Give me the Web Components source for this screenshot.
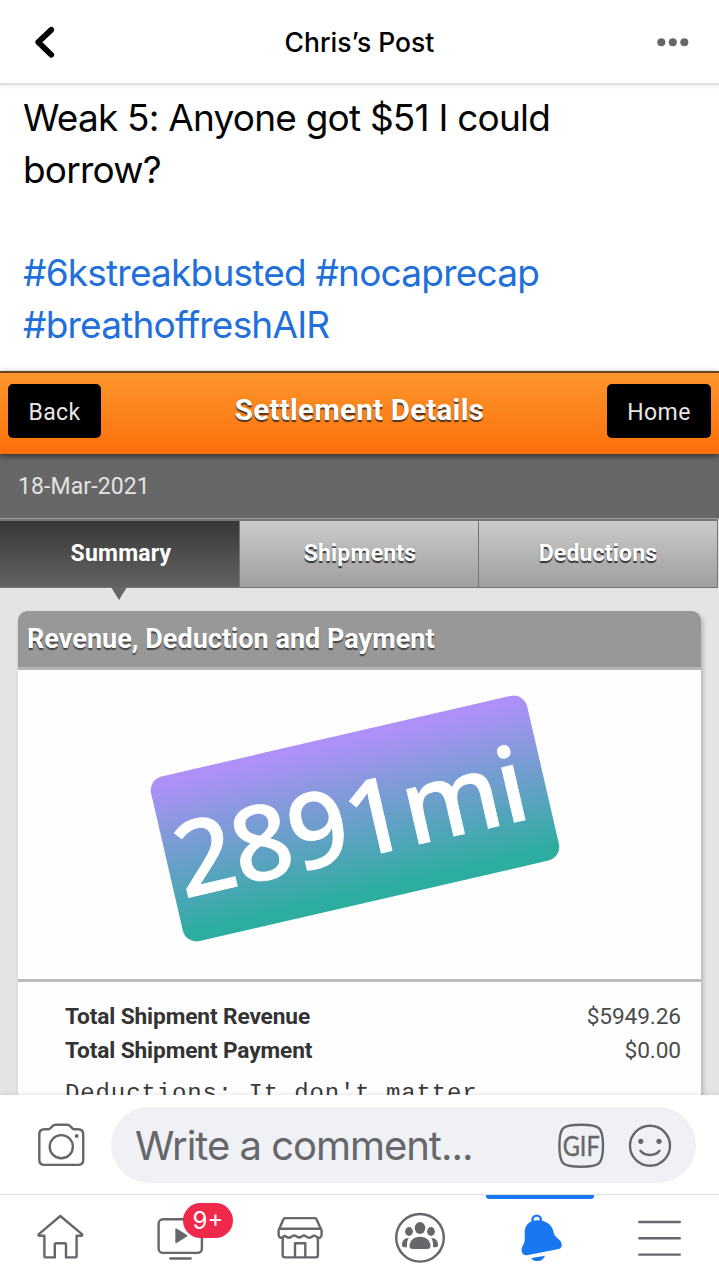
<!DOCTYPE html>
<html lang="en">
<head>
<meta charset="utf-8">
<title>Chris’s Post</title>
<style>
    body {
        margin: 0;
        background: #fff;
        font-family: Inter, "Liberation Sans", sans-serif;
    }
</style>
</head>
<body>
<post-page>
    <post-header slot="header">Chris’s Post</post-header>
    <post-text slot="content">
        <div>Weak 5: Anyone got $51 I could</div>
        <div>borrow?</div>
        <br>
        <post-tag>#6kstreakbusted</post-tag> <post-tag>#nocaprecap</post-tag>
        <div><post-tag>#breathoffreshAIR</post-tag></div>
    </post-text>
    <settlement-shot slot="content" date="18-Mar-2021">
        <shot-tab active>Summary</shot-tab>
        <shot-tab>Shipments</shot-tab>
        <shot-tab>Deductions</shot-tab>
        <mile-sticker slot="sticker">2891mi</mile-sticker>
        <amount-row slot="rows" amount="$5949.26">Total Shipment Revenue</amount-row>
        <amount-row slot="rows" amount="$0.00">Total Shipment Payment</amount-row>
        <span slot="note">Deductions: It don't matter</span>
    </settlement-shot>
    <comment-bar slot="footer">Write a comment...</comment-bar>
    <nav-bar slot="footer">
        <nav-item icon="home"></nav-item>
        <nav-item icon="watch" badge="9+"></nav-item>
        <nav-item icon="shop"></nav-item>
        <nav-item icon="groups"></nav-item>
        <nav-item icon="bell" active></nav-item>
        <nav-item icon="menu"></nav-item>
    </nav-bar>
</post-page>

<script>
// every element renders its markup once, into an open shadow root
function define(name, render) {
    window.customElements.define(name, class extends HTMLElement {
        constructor() {
            super();
            this.attachShadow({mode: 'open'});
            const template = document.createElement('template');
            template.innerHTML = render(this);
            this.shadowRoot.appendChild(template.content.cloneNode(true));
        }
    });
}

define('post-page', () => `
    <style>
        :host {
            display: flex;
            flex-direction: column;
            width: 719px;
            height: 1280px;
            overflow: hidden;
        }
        main {
            flex: 1;
            min-height: 0;
            overflow: hidden;
            display: flex;
            flex-direction: column;
        }
    </style>
    <slot name="header"></slot>
    <main><slot name="content"></slot></main>
    <footer><slot name="footer"></slot></footer>
`);

define('post-header', () => `
    <style>
        :host {
            display: grid;
            grid-template-columns: 100px 1fr 100px;
            align-items: center;
            height: 83px;
            flex: none;
            border-bottom: 2px solid #dedfe0;
            box-shadow: 0 1px 4px rgba(0, 0, 0, .09);
            box-sizing: content-box;
        }
        h1 {
            margin: 0;
            font-size: 26.5px;
            font-weight: 500;
            letter-spacing: 0;
            text-align: center;
        }
        svg {
            display: block;
        }
    </style>
    <svg width="100" height="83" fill="none" stroke="#000" stroke-width="5.8" stroke-linecap="round" stroke-linejoin="round">
        <path d="M51.2 29.8L38.3 42.2L51.2 54.8"/>
    </svg>
    <h1><slot></slot></h1>
    <svg width="100" height="83" fill="#65676b">
        <circle cx="42.3" cy="42.3" r="4"/>
        <circle cx="53.8" cy="42.3" r="4"/>
        <circle cx="65.3" cy="42.3" r="4"/>
    </svg>
`);

define('post-text', () => `
    <style>
        :host {
            display: block;
            flex: none;
            height: 278px;
            padding: 7px 23px 0;
            box-sizing: border-box;
            font-size: 37px;
            line-height: 51.8px;
            letter-spacing: -0.79px;
            white-space: nowrap;
            color: #050505;
        }
    </style>
    <slot></slot>
`);

define('post-tag', () => `
    <style>
        :host {
            color: #216fdb;
        }
    </style>
    <slot></slot>
`);

define('settlement-shot', el => `
    <style>
        :host {
            display: block;
            flex: none;
            margin-top: 8px;
            padding-bottom: 60px;
            background: #e4e4e4;
            font-family: Roboto, "Liberation Sans", sans-serif;
        }
        .bar {
            position: relative;
            display: flex;
            align-items: center;
            justify-content: space-between;
            height: 83px;
            box-sizing: border-box;
            padding: 0 8px 6px;
            border-top: 2px solid #6b4323;
            background: linear-gradient(#fd962d, #fc6f09);
            box-shadow: 0 2px 6px rgba(0, 0, 0, .55);
        }
        .button {
            height: 54px;
            border-radius: 5px;
            background: #000;
            color: #e6e6e6;
            font-size: 23px;
            line-height: 57px;
            letter-spacing: .4px;
            text-align: center;
        }
        .title {
            margin: -2px 0 0 11px;
            color: #fff;
            font-size: 29.5px;
            font-weight: 700;
            letter-spacing: .25px;
            text-shadow: 0 2px 1px #4a3527;
        }
        .date {
            height: 63px;
            padding: 1px 18px 0;
            background: #676767;
            color: #e2e2e2;
            font-size: 23px;
            line-height: 64px;
            letter-spacing: .1px;
        }
        .tabs {
            display: flex;
            height: 70px;
            padding-right: 1px;
            box-sizing: border-box;
            border-top: 1px solid #a0a0a0;
        }
        .card {
            margin: 23px 18px 0;
            border-radius: 9px 9px 0 0;
            background: #fefefe;
            box-shadow: 2px 3px 5px rgba(0, 0, 0, .22);
        }
        .head {
            height: 59px;
            padding: 0 9px;
            box-sizing: border-box;
            border-bottom: 3px solid #b5b5b5;
            border-radius: 9px 9px 0 0;
            background: #989898;
            color: #fff;
            font-size: 27px;
            font-weight: 700;
            line-height: 56px;
            letter-spacing: .03px;
            text-shadow: 0 2px 1px #454545;
        }
        .photo {
            display: flex;
            align-items: center;
            justify-content: center;
            height: 309px;
            border-bottom: 3px solid #babcbb;
        }
        .rows {
            padding: 18px 20px 0 47px;
        }
        .note {
            display: block;
            margin-top: 12px;
            color: #3a3a3a;
            font: 24px/30px "Liberation Mono", monospace;
            letter-spacing: .88px;
        }
    </style>
    <div class="bar">
        <div class="button" style="width: 93px">Back</div>
        <div class="title">Settlement Details</div>
        <div class="button" style="width: 104px">Home</div>
    </div>
    <div class="date">${el.getAttribute('date')}</div>
    <div class="tabs"><slot></slot></div>
    <div class="card">
        <div class="head">Revenue, Deduction and Payment</div>
        <div class="photo"><slot name="sticker"></slot></div>
        <div class="rows">
            <slot name="rows"></slot>
            <div class="note"><slot name="note"></slot></div>
        </div>
    </div>
`);

define('shot-tab', () => `
    <style>
        :host {
            position: relative;
            flex: 0 0 239px;
            box-sizing: border-box;
            padding-left: 2px;
            border: 1px solid #747474;
            border-left: 0;
            border-top-width: 2px;
            background: linear-gradient(#cbcbcb, #a09e9e);
            color: #fff;
            font-size: 23px;
            font-weight: 700;
            line-height: 66px;
            letter-spacing: .2px;
            text-align: center;
            text-shadow: 0 2px 1px #333;
        }
        :host(:last-of-type) {
            flex: 1;
            padding-left: 0;
        }
        :host([active]) {
            flex: 0 0 240px;
            padding-left: 3px;
            background: linear-gradient(#373735, #636363);
            text-shadow: none;
        }
        /* pointer under the open tab */
        :host([active])::after {
            content: "";
            position: absolute;
            top: 100%;
            left: 50%;
            margin-left: -9px;
            border: 8px solid transparent;
            border-top: 13px solid #666;
            border-bottom: 0;
        }
    </style>
    <slot></slot>
`);

define('mile-sticker', () => `
    <style>
        :host {
            display: block;
            width: 386px;
            height: 169px;
            box-sizing: border-box;
            padding-right: 12px;
            margin-right: 9px;
            margin-top: -13px;
            border-radius: 14px;
            background: linear-gradient(#ae90f8 4%, #2cada0 94%);
            transform: rotate(-13deg);
            color: #fff;
            font: 500 104px/168px "Noto Sans", sans-serif;
            letter-spacing: -1.2px;
            text-align: center;
            -webkit-text-stroke: .8px #fff;
        }
    </style>
    <slot></slot>
`);

define('amount-row', el => `
    <style>
        :host {
            display: flex;
            justify-content: space-between;
            color: #4c4c4c;
            font-size: 22.7px;
            line-height: 33.5px;
            letter-spacing: -0.12px;
        }
        b {
            color: #333;
            letter-spacing: -0.12px;
        }
    </style>
    <b><slot></slot></b>
    <span>${el.getAttribute('amount')}</span>
`);

define('comment-bar', () => `
    <style>
        :host {
            display: flex;
            position: relative;
            height: 99px;
            box-sizing: border-box;
            padding: 12px 23px 11px 0;
            background: #fff;
            box-shadow: 0 -1px 4px rgba(0, 0, 0, .09);
        }
        svg {
            flex: none;
            fill: none;
            stroke: #65676b;
            stroke-width: 2.4;
        }
        .field {
            flex: 1;
            display: flex;
            align-items: center;
            justify-content: space-between;
            border-radius: 38px;
            padding-left: 24px;
            background: #eff1f5;
            color: #65676b;
            font-size: 40px;
            letter-spacing: -1.03px;
            white-space: nowrap;
        }
        text {
            fill: #65676b;
            stroke: #65676b;
            stroke-width: .4;
            font: 27px Lato, sans-serif;
            letter-spacing: 0;
        }
    </style>
    <svg width="111" height="76">
        <path d="M44.5 22.3H48.5C51 22.3 51.5 17.8 55.5 17.8H67.2C71 17.8 71.6 22.3 74.2 22.3H78Q83.2 22.3 83.2 27.5V52.7Q83.2 57.9 78 57.9H44.5Q39.3 57.9 39.3 52.7V27.5Q39.3 22.3 44.5 22.3Z"/>
        <circle cx="61.3" cy="39.7" r="11.6"/>
        <circle cx="76.7" cy="29" r="1.9" fill="#65676b" stroke="none"/>
    </svg>
    <div class="field">
        <slot></slot>
        <svg width="146" height="76">
            <path d="M31 17.8C50 17.8 53 20.5 53 38.5C53 57 50 59.7 31 59.7C12 59.7 9.4 57 9.4 38.5C9.4 20.5 12 17.8 31 17.8Z"/>
            <text x="31.2" y="48.7" text-anchor="middle" textLength="37" lengthAdjust="spacingAndGlyphs">GIF</text>
            <circle cx="100" cy="38.7" r="20"/>
            <path d="M90.5 43.8C94.5 49.3 105.5 49.3 109.5 43.8" stroke-linecap="round"/>
            <g fill="#65676b" stroke="none">
                <circle cx="90.8" cy="34.3" r="2.6"/>
                <circle cx="109" cy="34.3" r="2.6"/>
            </g>
        </svg>
    </div>
`);

define('nav-bar', () => `
    <style>
        :host {
            display: flex;
            height: 86px;
            box-sizing: border-box;
            border-top: 1px solid #e3e4e6;
            background: #fff;
        }
    </style>
    <slot></slot>
`);

// drawn on a 120x85 grid, one grid for each nav column
const icons = {
    home: `
        <path d="M60.3 21L38.6 39.3Q38.3 40.6 39.5 40.7H44.4V61Q44.4 62.4 45.8 62.4H54.8V49.5Q54.8 48.2 56.2 48.2H64.6Q66 48.2 66 49.5V62.4H75.2Q76.6 62.4 76.6 61V40.7H81.3Q82.5 40.6 82.2 39.3Z"/>`,
    watch: `
        <rect x="38.6" y="24.3" width="43.3" height="33.6" rx="4.5"/>
        <path d="M50.3 63.5H70.6"/>
        <path class="fill" d="M55.3 34.2Q55.3 33 56.5 33.6L67 40Q67.8 40.8 67 41.6L56.5 48Q55.3 48.6 55.3 47.5Z"/>`,
    shop: `
        <path d="M45.3 23.1H74.7Q76.2 23.1 76.6 24.5L81.6 35.5V40Q80.6 44.2 77.3 42.5Q74.5 39.2 71.7 41.8Q69.2 43.8 66.8 41.8Q63.8 39.2 61.3 41.8Q59.3 43.3 57.3 41.8Q54.3 39.2 51.3 41.8Q48.8 43.8 46.3 41.8Q44.3 39.8 42.3 42.5Q39.6 43.8 38.6 40V35.5L43.3 24.5Q43.8 23.1 45.3 23.1Z"/>
        <path d="M39.6 33.8H80.6M42.7 42.5V60Q42.7 62.4 45 62.4H75.6Q77.9 62.4 77.9 60V42.5M55 62.4V48.3H65.3V62.4"/>`,
    groups: `
        <circle cx="60" cy="42.8" r="23.8"/>
        <g class="fill">
            <ellipse cx="60" cy="33" rx="5.3" ry="5.9"/>
            <ellipse cx="49" cy="36.5" rx="3.9" ry="4.4"/>
            <ellipse cx="71" cy="36.5" rx="3.9" ry="4.4"/>
            <path d="M60 41.8C66.5 41.8 70.3 46 70.5 51Q70.5 54 67.5 54H52.5Q49.5 54 49.5 51C49.7 46 53.5 41.8 60 41.8Z"/>
            <path d="M48.8 43C46.8 45.7 46.9 49 46.9 52.2H43.7Q41.8 52 41.9 50C42.2 46 44.3 42.7 48.8 43Z"/>
            <path d="M71.2 43C73.2 45.7 73.1 49 73.1 52.2H76.3Q78.2 52 78.1 50C77.8 46 75.7 42.7 71.2 43Z"/>
        </g>`,
    bell: `
        <circle cx="56.7" cy="24.8" r="4.2"/>
        <path class="fill" d="M57.5 25.3C66 25.3 72.6 30 73.7 37.5C74.5 43 82 44.5 81.8 50Q81.7 53.2 78.8 54L46.8 60.2C42.3 60.7 40.5 56 42.2 52C44.2 48 45.2 46.5 44.7 40C44 31 48.5 25.4 57.5 25.3Z"/>
        <path class="fill" d="M51.3 62.9L65 60.7C63.8 64.3 60.8 66.2 57.8 66.1C55 66.2 52.6 65.1 51.3 62.9Z"/>`,
    menu: `
        <path d="M39.3 27H79.8M39.3 43.3H79.8M39.3 59.6H79.8"/>`
};

define('nav-item', el => `
    <style>
        :host {
            position: relative;
            flex: 1;
            color: #65676b;
        }
        :host([active]) {
            color: #1977f2;
        }
        :host([active])::before {
            content: "";
            position: absolute;
            top: 0;
            left: 5.5px;
            right: 6px;
            height: 4px;
            border-radius: 0 0 3px 3px;
            background: currentColor;
        }
        svg {
            display: block;
            fill: none;
            stroke: currentColor;
            stroke-width: 2.4;
            stroke-linecap: round;
            stroke-linejoin: round;
        }
        .fill {
            fill: currentColor;
            stroke: none;
        }
        .badge {
            position: absolute;
            left: 63px;
            top: 8px;
            width: 50px;
            height: 35px;
            border-radius: 18px;
            background: #f02849;
            color: #fff;
            font-size: 24px;
            line-height: 35px;
            text-align: center;
        }
    </style>
    <svg width="120" height="85">${icons[el.getAttribute('icon')]}</svg>
    ${el.hasAttribute('badge') ? `<span class="badge">${el.getAttribute('badge')}</span>` : ''}
`);
</script>
</body>
</html>
